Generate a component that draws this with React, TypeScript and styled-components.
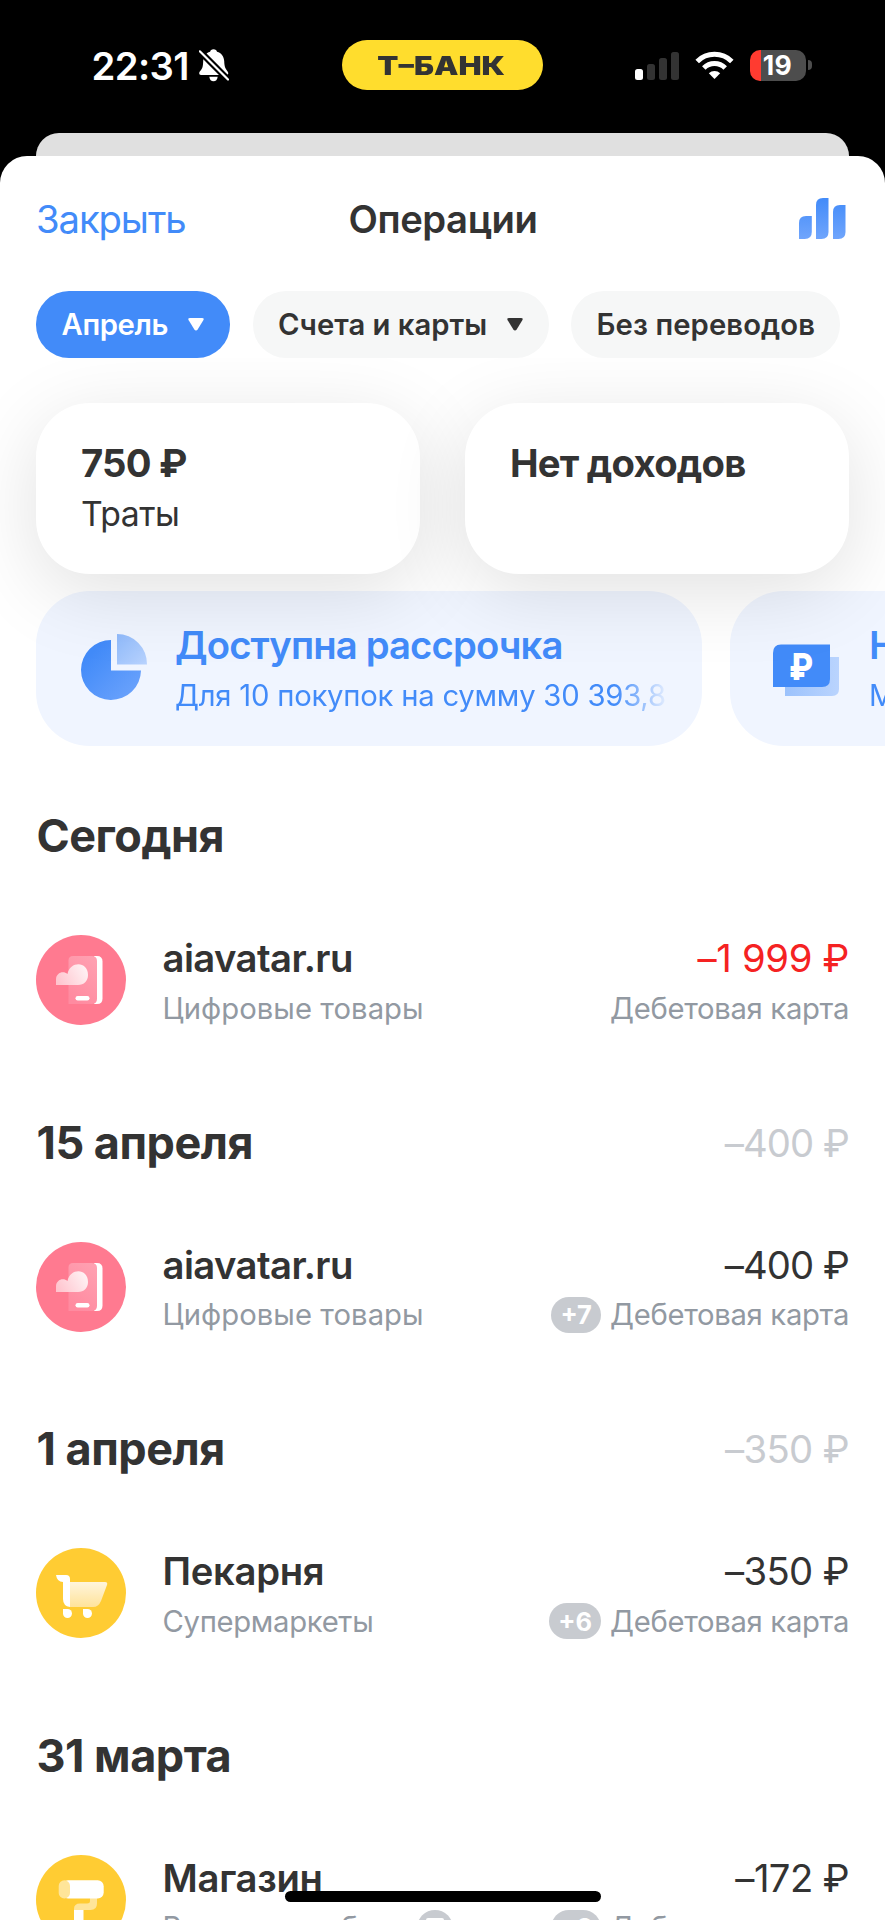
import React from "react";
import styled, { createGlobalStyle } from "styled-components";

const ink = "#333333";
const blue = "#428BF9";
const muted = "#9299A2";
const faint = "#C8CBD0";

const GlobalStyle = createGlobalStyle`
  * { box-sizing: border-box; }
  html, body { margin: 0; background: #000; }
  body { font-family: Inter, "Noto Sans", sans-serif; color: ${ink}; }
  svg { display: block; flex: none; }
`;

const Screen = styled.div`
  position: relative;
  width: 885px;
  height: 1920px;
  overflow: hidden;
  background: #000;
`;

/* Status bar */
const StatusBar = styled.header`
  display: grid;
  grid-template-columns: 342px 201px 1fr;
  align-items: center;
  height: 133px;
  padding-bottom: 3px;
`;

const Clock = styled.div`
  display: flex;
  align-items: center;
  padding-left: 91.5px;
  gap: 10.5px;
  color: #fff;
`;

const Time = styled.span`
  font-size: 38.25px;
  font-weight: 560;
  line-height: 46px;
  letter-spacing: -0.6px;
  margin-top: 2px;
`;

const BrandPill = styled.div`
  display: flex;
  align-items: center;
  justify-content: center;
  height: 50px;
  border-radius: 25px;
  background: #ffdd2d;
`;

const Brand = styled.span`
  margin: 1px 2px 0 0;
  font-size: 25.7px;
  font-weight: 900;
  line-height: 30px;
  transform: scaleX(1.2);
`;

const Indicators = styled.div`
  display: flex;
  align-items: center;
  padding-left: 92px;
`;

const SignalBars = styled.div`
  display: flex;
  align-items: flex-end;
  gap: 4px;
  margin-right: 16px;
  margin-top: 2px;
`;

const SignalBar = styled.i<{ $height: number; $on?: boolean }>`
  width: 8px;
  height: ${(p) => p.$height}px;
  border-radius: 2.5px;
  background: ${(p) => (p.$on ? "#fff" : "#333")};
`;

const Battery = styled.div`
  display: flex;
  align-items: center;
  justify-content: center;
  width: 56px;
  height: 31px;
  margin-left: 16px;
  padding: 1px 1px 0 0;
  border-radius: 10px;
  background: linear-gradient(90deg, #ff3b30 10.7px, #4d4d4d 10.7px);
  color: #fff;
  font-size: 26.5px;
  font-weight: 700;
  letter-spacing: 0.4px;
  line-height: 31px;
`;

const BatteryTip = styled.i`
  width: 3.5px;
  height: 10px;
  margin-left: 2px;
  border-radius: 0 5px 5px 0;
  background: #4d4d4d;
`;

/* Sheet */
const BackSheet = styled.div`
  height: 23px;
  margin: 0 36px;
  border-radius: 26px 26px 0 0;
  background: #e0e0e0;
`;

const Sheet = styled.main`
  height: 1764px;
  border-radius: 27px 27px 0 0;
  background: #fff;
`;

const NavBar = styled.nav`
  display: grid;
  grid-template-columns: 1fr auto 1fr;
  align-items: center;
  padding: 39px 39px 0;
  line-height: 46px;
  font-size: 38.25px;
`;

const CloseButton = styled.a`
  margin-left: -3px;
  padding-top: 1px;
  color: ${blue};
  letter-spacing: -1.1px;
`;

const NavTitle = styled.h1`
  margin: 0;
  padding: 1px 0 0 1px;
  font: inherit;
  font-weight: 600;
  letter-spacing: -0.45px;
`;

const NavAction = styled.div`
  display: flex;
  justify-content: flex-end;
`;

const Chips = styled.div`
  display: flex;
  gap: 22.5px;
  padding: 49px 36px 0;
`;

const Chip = styled.button<{ $width: number; $active?: boolean; $spacing?: number }>`
  display: flex;
  align-items: center;
  flex: none;
  gap: 20px;
  width: ${(p) => p.$width}px;
  height: 67px;
  padding: 0 0 0 25.5px;
  border: 0;
  border-radius: 33px;
  background: ${(p) => (p.$active ? blue : "#F6F7F7")};
  color: ${(p) => (p.$active ? "#fff" : ink)};
  font: 600 29.25px Inter, sans-serif;
  letter-spacing: ${(p) => p.$spacing ?? 0}px;
  white-space: nowrap;
`;

const Feed = styled.div`
  height: 1562px;
  overflow: hidden;
  padding-top: 45px;
`;

const Totals = styled.div`
  position: relative;
  z-index: 1;
  display: flex;
  gap: 45px;
  padding: 0 36px;
`;

const TotalCard = styled.div`
  flex: 1;
  height: 171px;
  padding: 36.5px 0 0 45px;
  border-radius: 54px;
  background: #fff;
  box-shadow: 0 18px 80px rgba(0, 0, 0, 0.12);
`;

const TotalValue = styled.div`
  font-size: 38.25px;
  font-weight: 700;
  line-height: 46px;
  letter-spacing: -0.78px;
`;

const TotalLabel = styled.div`
  margin-top: 8.5px;
  font-size: 33.75px;
  line-height: 40px;
  letter-spacing: -0.52px;
`;

const Banners = styled.div`
  display: flex;
  gap: 28px;
  margin-top: 17px;
  padding-left: 36px;
`;

const Banner = styled.div`
  display: flex;
  align-items: center;
  flex: none;
  width: 666px;
  height: 155px;
  padding: 0 35px 0 41px;
  border-radius: 54px;
  background: #f0f5ff;
  color: ${blue};
`;

const BannerText = styled.div`
  flex: 1;
  height: 93px;
  margin-left: 24px;
  overflow: hidden;
  white-space: nowrap;
`;

const BannerTitle = styled.div`
  font-size: 38.25px;
  font-weight: 600;
  line-height: 46px;
  letter-spacing: -0.86px;
`;

const BannerNote = styled.div`
  margin-top: 8px;
  font-size: 29.25px;
  line-height: 39px;
  letter-spacing: -0.23px;
  mask-image: linear-gradient(90deg, #000 440px, rgba(0, 0, 0, 0.08) 491px);
`;

const BannerGlyph = styled.text`
  font: 800 37px Inter, sans-serif;
`;

/* Operations */
const Days = styled.div`
  display: flex;
  flex-direction: column;
  gap: 87.5px;
  padding: 63px 36px 0;
`;

const DayHeader = styled.div`
  display: flex;
  align-items: center;
  justify-content: space-between;
  height: 54px;
  margin-bottom: 72px;
`;

const DayTitle = styled.h2`
  margin: 0 0 0 0.5px;
  font-size: 45px;
  font-weight: 700;
  line-height: 54px;
  letter-spacing: -0.5px;
`;

const Amount = styled.div<{ $tone?: string; $spacing?: number }>`
  padding-top: 1px;
  font-size: 38.25px;
  line-height: 45px;
  letter-spacing: ${(p) => p.$spacing ?? -0.6}px;
  color: ${(p) => p.$tone ?? ink};
`;

const Operation = styled.div`
  display: flex;
  height: 93px;
`;

const Details = styled.div`
  flex: 1;
  margin-left: 36.5px;
`;

const Charge = styled.div`
  display: flex;
  flex-direction: column;
  align-items: flex-end;
`;

const Name = styled.div<{ $spacing?: number }>`
  padding-top: 1px;
  font-size: 38.25px;
  font-weight: 570;
  line-height: 45px;
  letter-spacing: ${(p) => p.$spacing ?? -0.3}px;
`;

const Meta = styled.div<{ $spacing?: number }>`
  display: flex;
  align-items: center;
  gap: 9px;
  height: 40px;
  margin-top: 7px;
  font-size: 29.25px;
  letter-spacing: ${(p) => p.$spacing ?? -0.32}px;
  color: ${muted};
  white-space: nowrap;
`;

const Bonus = styled.span<{ $width: number }>`
  display: flex;
  align-items: center;
  justify-content: center;
  width: ${(p) => p.$width}px;
  height: 36px;
  border-radius: 18px;
  background: ${faint};
  color: #fff;
  font-size: 25.5px;
  font-weight: 700;
  letter-spacing: 0;
`;

const HomeIndicator = styled.div`
  position: absolute;
  left: 285px;
  bottom: 18px;
  width: 316px;
  height: 11px;
  border-radius: 6px;
  background: #000;
`;

const BellOffIcon = () => (
  <svg width="30" height="33" viewBox="0 0 30 33">
    <path
      d="M14.5 0.2C16.6 0.2 17.7 1.3 18 2.7C22.5 4 25 7.5 25.2 12C25.4 17.5 26.2 19.6 28.6 22.4C30 24.4 29 26 27.4 26H2C.2 26-.3 24.2.8 22.6C3.4 19.8 4 17.8 4.2 12C4.4 7.5 6.8 4 11.1 2.7C11.4 1.3 12.5.2 14.5.2Z"
      fill="#fff"
    />
    <path d="M10.3 27.8H18.7C18.3 30.9 16.8 32.3 14.5 32.3S10.7 30.9 10.3 27.8Z" fill="#fff" />
    <path d="M0 1.5L29.5 31" stroke="#000" strokeWidth="6.5" />
    <path d="M.8 2.3L29 30.5" stroke="#fff" strokeWidth="2.2" strokeLinecap="round" />
  </svg>
);

const WifiIcon = () => (
  <svg width="39" height="29" viewBox="0 0 39 29">
    <g fill="none" stroke="#fff" strokeWidth="5">
      <path d="M2.2 10.4A24.5 24.5 0 0 1 36.8 10.4" />
      <path d="M8.8 17A15.2 15.2 0 0 1 30.2 17" />
    </g>
    <path d="M19.5 28L13.8 22.2A8.2 8.2 0 0 1 25.2 22.2Z" fill="#fff" />
  </svg>
);

const ChartIcon = () => (
  <svg width="47" height="41" viewBox="0 0 47 41">
    <defs>
      <linearGradient id="bars" x1="0" y1="0" x2="0" y2="41" gradientUnits="userSpaceOnUse">
        <stop stopColor="#428BF9" />
        <stop offset="1" stopColor="#70A5FC" />
      </linearGradient>
    </defs>
    <g fill="url(#bars)">
      <path d="M0 25Q0 18 7 18H12.8V34Q12.8 41 5.8 41H0Z" />
      <path d="M17 7Q17 0 24 0H29.5V34Q29.5 41 22.5 41H17Z" />
      <path d="M34 14Q34 7 41 7H46.5V34Q46.5 41 39.5 41H34Z" />
    </g>
  </svg>
);

const CaretIcon = () => (
  <svg width="16" height="13" viewBox="0 0 16 13">
    <path d="M2 0H14Q16.6 0 15.3 2.3L9.8 11.2Q8 13.8 6.2 11.2L.7 2.3Q-.6 0 2 0Z" fill="currentColor" />
  </svg>
);

const PieIcon = () => (
  <svg width="74" height="74" viewBox="0 0 74 74">
    <defs>
      <linearGradient id="pie" x1="0" y1="0" x2="1" y2="1">
        <stop offset="0.2" stopColor="#428BF9" />
        <stop offset="1" stopColor="#70A5FC" />
      </linearGradient>
      <linearGradient id="slice" x1="0" y1="0" x2="1" y2="1">
        <stop stopColor="#8FBAFB" />
        <stop offset="1" stopColor="#B9D3FE" />
      </linearGradient>
    </defs>
    <path d="M34 8A30 30 0 1 0 64 38.5H34Z" fill="url(#pie)" />
    <path d="M40 2A30 30 0 0 1 70 32.5H40Z" fill="url(#slice)" />
  </svg>
);

const BanknoteIcon = () => (
  <svg width="74" height="74" viewBox="0 0 74 74">
    <defs>
      <linearGradient id="note" x1="0" y1="0" x2="1" y2="0">
        <stop stopColor="#9CC2FC" />
        <stop offset="1" stopColor="#BAD4FE" />
      </linearGradient>
    </defs>
    <path d="M14 25H68V57Q68 64 61 64H14Z" fill="url(#note)" />
    <path d="M2 21Q2 12.5 10 12.5H59V47Q59 55 51 55H2Z" fill="#428BF9" />
    <BannerGlyph x="18" y="47.5" fill="#fff" textLength="24" lengthAdjust="spacingAndGlyphs">
      ₽
    </BannerGlyph>
  </svg>
);

const DigitalIcon = () => (
  <svg width="90" height="90" viewBox="0 0 90 90">
    <defs>
      <linearGradient id="phone" x1="32" y1="60" x2="60" y2="25" gradientUnits="userSpaceOnUse">
        <stop stopColor="#FF8BA0" />
        <stop offset="1" stopColor="#FFA0B1" />
      </linearGradient>
      <linearGradient id="cloud" x1="22" y1="50" x2="50" y2="34" gradientUnits="userSpaceOnUse">
        <stop stopColor="#FFC3CD" />
        <stop offset="1" stopColor="#FFF1F3" />
      </linearGradient>
    </defs>
    <circle cx="45" cy="45" r="45" fill="#FF7A90" />
    <path d="M58 21H61Q66.5 21 66.5 26.5V63.5Q66.5 69 61 69H58Z" fill="#fff" />
    <path d="M37 21H55.5Q61 21 61 26V64Q61 69 55.5 69H32.5V25.5Q32.5 21 37 21Z" fill="url(#phone)" />
    <path d="M20 50V44.5C20 38 27 35.4 31.5 39C34 26 52 26 52 40C52 46 48 50 42 50Z" fill="url(#cloud)" />
    <rect x="39.5" y="61" width="14" height="4.5" rx="2.2" fill="#fff" />
  </svg>
);

const CartIcon = () => (
  <svg width="90" height="90" viewBox="0 0 90 90">
    <defs>
      <linearGradient id="basket" x1="0" y1="0" x2="0" y2="1">
        <stop stopColor="#FFF5DC" />
        <stop offset="1" stopColor="#FFE39A" />
      </linearGradient>
    </defs>
    <circle cx="45" cy="45" r="45" fill="#FFCC33" />
    <path d="M34 34H69Q72 34 71 37L65 53Q62.5 59 57 59H34Z" fill="url(#basket)" />
    <path d="M20 27H30Q34 27 34 31V59Q27 58 27 51V34Q21 34 20 27Z" fill="#fff" />
    <path d="M27 61H31.5A4.5 4.5 0 1 1 27 65.5Z" fill="#fff" />
    <path d="M47 61H51.5A4.5 4.5 0 1 1 47 65.5Z" fill="#fff" />
  </svg>
);

const RollerIcon = () => (
  <svg width="90" height="90" viewBox="0 0 90 90">
    <circle cx="45" cy="45" r="45" fill="#FFCC33" />
    <path d="M54 43H61V48.5Q61 55 54.5 55H38V54Q38 48.5 44 48.5H51Q54 48.5 54 46Z" fill="#FFE599" />
    <rect x="26" y="25.3" width="41.7" height="18.2" rx="6" fill="#fff" />
    <rect x="22.7" y="25.3" width="11.3" height="18.2" rx="5.6" fill="#FFE599" />
    <path d="M38 55H47.5V90H38Z" fill="#fff" />
  </svg>
);

const ReceiptBadge = () => (
  <svg width="36" height="36" viewBox="0 0 36 36">
    <circle cx="18" cy="18" r="18" fill={faint} />
    <path d="M9 10Q9 8 11 8H25Q27 8 27 10V27L23 24.5L18 27.5L13 24.5L9 27Z" fill="#fff" />
  </svg>
);

type Entry = {
  day: string;
  total?: string;
  icon: React.ReactNode;
  name: string;
  nameSpacing?: number;
  category: string;
  categorySpacing?: number;
  receipt?: boolean;
  amount: string;
  tone?: string;
  amountSpacing?: number;
  bonus?: string;
  bonusWidth?: number;
};

const entries: Entry[] = [
  { day: "Сегодня", icon: <DigitalIcon />, name: "aiavatar.ru", nameSpacing: -0.58, category: "Цифровые товары", categorySpacing: 0.05, amount: "–1 999 ₽", tone: "#F52222", amountSpacing: -0.34 },
  { day: "15 апреля", total: "–400 ₽", icon: <DigitalIcon />, name: "aiavatar.ru", nameSpacing: -0.58, category: "Цифровые товары", categorySpacing: 0.05, amount: "–400 ₽", amountSpacing: -0.9, bonus: "+7", bonusWidth: 50 },
  { day: "1 апреля", total: "–350 ₽", icon: <CartIcon />, name: "Пекарня", category: "Супермаркеты", amount: "–350 ₽", bonus: "+6", bonusWidth: 52 },
  { day: "31 марта", icon: <RollerIcon />, name: "Магазин", category: "Ремонт и мебель", categorySpacing: -0.15, receipt: true, amount: "–172 ₽", bonus: "+3", bonusWidth: 50 },
];

export default function App() {
  return (
    <Screen>
      <GlobalStyle />
      <StatusBar>
        <Clock>
          <Time>22:31</Time>
          <BellOffIcon />
        </Clock>
        <BrandPill>
          <Brand>Т–БАНК</Brand>
        </BrandPill>
        <Indicators>
          <SignalBars>
            <SignalBar $height={11} $on />
            <SignalBar $height={16} />
            <SignalBar $height={22} />
            <SignalBar $height={28} />
          </SignalBars>
          <WifiIcon />
          <Battery>19</Battery>
          <BatteryTip />
        </Indicators>
      </StatusBar>
      <BackSheet />
      <Sheet>
        <NavBar>
          <CloseButton>Закрыть</CloseButton>
          <NavTitle>Операции</NavTitle>
          <NavAction>
            <ChartIcon />
          </NavAction>
        </NavBar>
        <Chips>
          <Chip $width={194} $active $spacing={-0.38}>
            Апрель
            <CaretIcon />
          </Chip>
          <Chip $width={296} $spacing={0}>
            Счета и карты
            <CaretIcon />
          </Chip>
          <Chip $width={269} $spacing={0.1}>
            Без переводов
          </Chip>
        </Chips>
        <Feed>
          <Totals>
            <TotalCard>
              <TotalValue>750 ₽</TotalValue>
              <TotalLabel>Траты</TotalLabel>
            </TotalCard>
            <TotalCard>
              <TotalValue>Нет доходов</TotalValue>
            </TotalCard>
          </Totals>
          <Banners>
            <Banner>
              <PieIcon />
              <BannerText>
                <BannerTitle>Доступна рассрочка</BannerTitle>
                <BannerNote>Для 10 покупок на сумму 30 393,8</BannerNote>
              </BannerText>
            </Banner>
            <Banner>
              <BanknoteIcon />
              <BannerText>
                <BannerTitle>Н</BannerTitle>
                <BannerNote>М</BannerNote>
              </BannerText>
            </Banner>
          </Banners>
          <Days>
            {entries.map((e) => (
              <section key={e.day}>
                <DayHeader>
                  <DayTitle>{e.day}</DayTitle>
                  {e.total && (
                    <Amount $tone={faint} $spacing={e.amountSpacing}>
                      {e.total}
                    </Amount>
                  )}
                </DayHeader>
                <Operation>
                  {e.icon}
                  <Details>
                    <Name $spacing={e.nameSpacing}>{e.name}</Name>
                    <Meta $spacing={e.categorySpacing}>
                      {e.category}
                      {e.receipt && <ReceiptBadge />}
                    </Meta>
                  </Details>
                  <Charge>
                    <Amount $tone={e.tone} $spacing={e.amountSpacing}>
                      {e.amount}
                    </Amount>
                    <Meta>
                      {e.bonus && <Bonus $width={e.bonusWidth ?? 50}>{e.bonus}</Bonus>}
                      Дебетовая карта
                    </Meta>
                  </Charge>
                </Operation>
              </section>
            ))}
          </Days>
        </Feed>
      </Sheet>
      <HomeIndicator />
    </Screen>
  );
}
